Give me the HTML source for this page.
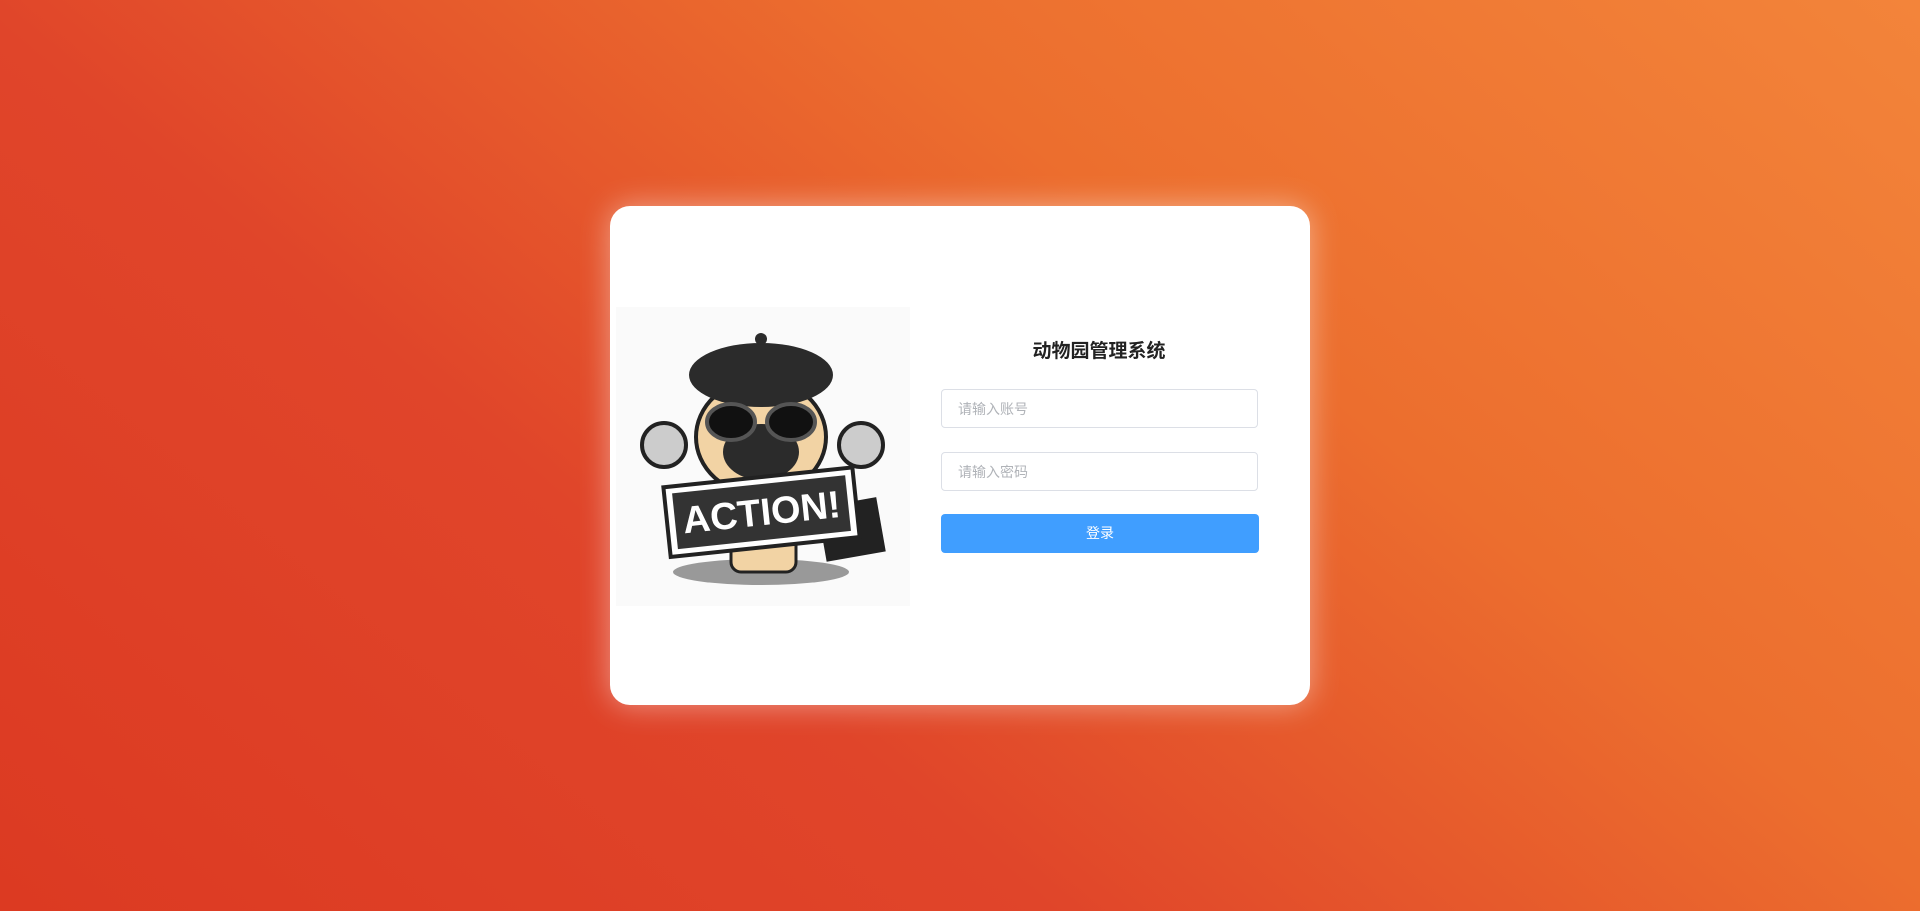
<!DOCTYPE html>
<html><head><meta charset="utf-8"><style>
html,body{margin:0;padding:0;width:1920px;height:911px;overflow:hidden}
body{background:linear-gradient(220deg,#f3843a 0%,#ec6e2e 35%,#e0452a 65%,#dc3a22 100%);font-family:"Liberation Sans","Noto Sans CJK SC",sans-serif;position:relative}
.card{position:absolute;left:610px;top:206px;width:700px;height:499px;background:#fff;border-radius:20px;box-shadow:0 0 30px rgba(255,255,255,.45)}
.img{position:absolute;left:6px;top:101px;width:294px;height:299px;background:#fafafa}
.title{position:absolute;left:330px;width:318px;top:130px;text-align:center;font-size:19px;font-weight:bold;color:#222}
.inp{position:absolute;left:331px;width:317px;height:39px;border:1px solid #dcdfe6;border-radius:4px;font-size:14px;color:#b0b3b8;line-height:39px;padding-left:16px;box-sizing:border-box}
.btn{position:absolute;left:331px;width:318px;top:308px;height:39px;background:#409eff;border-radius:4px;color:#fff;font-size:14px;text-align:center;line-height:39px}
</style></head><body>
<div class="card">
<div class="img"><svg width="294" height="299" viewBox="0 0 294 299">
<ellipse cx="145" cy="265" rx="88" ry="13" fill="#999"/>
<circle cx="48" cy="138" r="22" fill="#ccc" stroke="#222" stroke-width="4"/>
<circle cx="245" cy="138" r="22" fill="#ccc" stroke="#222" stroke-width="4"/>
<rect x="205" y="195" width="60" height="55" fill="#222" transform="rotate(-10 235 220)"/>
<ellipse cx="145" cy="130" rx="65" ry="58" fill="#f2d3a4" stroke="#222" stroke-width="4"/>
<ellipse cx="145" cy="68" rx="72" ry="32" fill="#2b2b2b"/>
<circle cx="145" cy="32" r="6" fill="#2b2b2b"/>
<ellipse cx="145" cy="145" rx="38" ry="28" fill="#2b2b2b"/>
<ellipse cx="115" cy="115" rx="24" ry="18" fill="#111" stroke="#555" stroke-width="4"/>
<ellipse cx="175" cy="115" rx="24" ry="18" fill="#111" stroke="#555" stroke-width="4"/>
<rect x="115" y="195" width="65" height="70" rx="10" fill="#f2d3a4" stroke="#222" stroke-width="3"/>
<g transform="rotate(-6 147 200)"><rect x="50" y="170" width="190" height="70" fill="#fff" stroke="#222" stroke-width="4"/><rect x="58" y="177" width="174" height="56" fill="#333"/>
<text x="145" y="218" text-anchor="middle" font-family="Liberation Sans" font-weight="bold" font-size="38" fill="#fff">ACTION!</text></g>
</svg></div>
<div class="title">动物园管理系统</div>
<div class="inp" style="top:183px">请输入账号</div>
<div class="inp" style="top:246px">请输入密码</div>
<div class="btn">登录</div>
</div>
</body></html>
